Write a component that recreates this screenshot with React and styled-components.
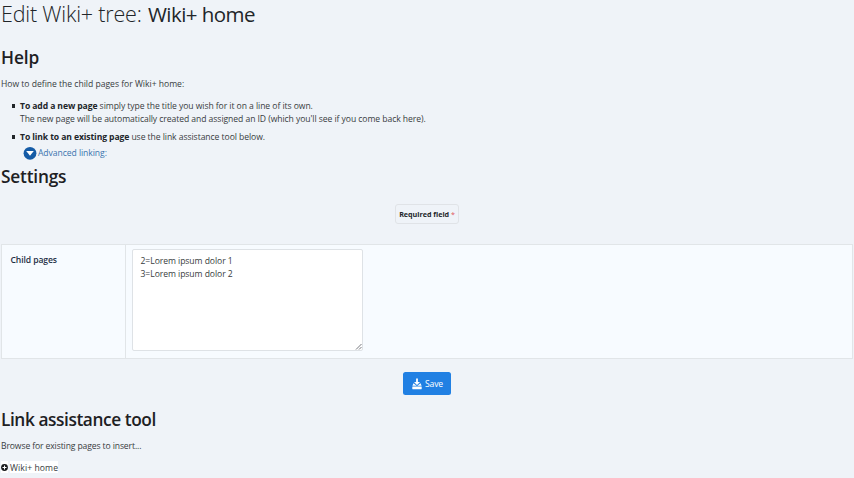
import React from "react";
import styled, { createGlobalStyle } from "styled-components";

const GlobalStyle = createGlobalStyle`
  * { box-sizing: border-box; }
  body {
    margin: 0;
    background: #eff3f8;
    color: #383c40;
    font: 400 8.6px/13.5px "Open Sans", "Noto Sans", sans-serif;
    letter-spacing: -0.065px;
    overflow: hidden;
  }
`;

const Page = styled.main`
  display: flex;
  flex-direction: column;
  width: 854px;
  height: 478px;
  padding: 0 1px;
`;

const Title = styled.h1`
  margin: 0;
  height: 28px;
  font-size: 21.5px;
  line-height: 27px;
  font-weight: 300;
  letter-spacing: -0.2px;
  color: #212529;
  white-space: nowrap;
`;

const TitleName = styled.span`
  margin-left: 1px;
  font-size: 20.5px;
  font-weight: 400;
  letter-spacing: -0.55px;
`;

const Heading = styled.h2`
  margin: ${(p) => p.$top}px 0 0;
  height: 20px;
  font-size: 17.3px;
  line-height: 20px;
  font-weight: 600;
  letter-spacing: ${(p) => p.$tracking || 0}px;
  color: #1d2023;
`;

const Paragraph = styled.p`
  margin: ${(p) => p.$top}px 0 0;
  height: 14px;
  line-height: 14px;
  letter-spacing: ${(p) => p.$tracking || 0}px;
`;

const HelpList = styled.ul`
  list-style: none;
  margin: 8.5px 0 0;
  padding: 0 0 0 19px;
`;

const HelpItem = styled.li`
  position: relative;
  margin-bottom: 4px;
  &::before {
    content: "";
    position: absolute;
    left: -8.5px;
    top: 4.5px;
    width: 3.5px;
    height: 4px;
    background: #212529;
  }
`;

const Strong = styled.strong`
  font-weight: 700;
  letter-spacing: -0.1px;
  color: #212529;
`;

const Toggle = styled.a`
  display: flex;
  align-items: center;
  height: 14px;
  margin: -2.5px 0 0 22px;
  gap: 1px;
  line-height: 14px;
  color: #3a73ae;
  svg { flex: none; }
`;

const RequiredNote = styled.div`
  align-self: center;
  width: 64px;
  height: 20px;
  margin: 17px 0 0 0;
  border: 1px solid #e0e3e7;
  border-radius: 3px;
  text-align: center;
  font-size: 7.2px;
  line-height: 19px;
  font-weight: 700;
  letter-spacing: -0.03px;
  color: #212529;
`;

const Asterisk = styled.span`
  font-weight: 400;
  color: #e0575b;
`;

const FormTable = styled.section`
  display: grid;
  grid-template-columns: 124px 1fr;
  height: 115px;
  margin-top: 20px;
  border: 1px solid #e1e5e8;
  background: #f7fbff;
`;

const LabelCell = styled.div`
  padding: 9px 8.5px;
  border-right: 1px solid #e1e5e8;
  font-weight: 600;
  letter-spacing: -0.1px;
  color: #1e2f45;
`;

const FieldCell = styled.div`
  padding: 4px 6px;
`;

const PagesArea = styled.textarea`
  display: block;
  width: 231px;
  height: 102px;
  padding: 5px 7.5px;
  border: 1px solid #dee2e6;
  border-radius: 2px;
  outline: 0;
  resize: none;
  background: #fff;
  color: #383c40;
  font: inherit;
  letter-spacing: -0.06px;
`;

const FieldFrame = styled.div`
  position: relative;
  width: 231px;
  svg {
    position: absolute;
    right: 1px;
    bottom: 1px;
  }
`;

const SaveButton = styled.button`
  display: flex;
  align-items: center;
  align-self: center;
  width: 48px;
  height: 23px;
  margin-top: 13px;
  padding: 1px 0 0 9px;
  gap: 3px;
  border: 0;
  border-radius: 2.5px;
  background: #2180e3;
  color: #fff;
  font: inherit;
  line-height: 14px;
  letter-spacing: -0.15px;
`;

const SaveLabel = styled.span`
  padding-top: 1px;
`;

const TreeRow = styled.div`
  display: flex;
  align-items: center;
  margin-top: 8px;
  height: 12px;
  gap: 2px;
`;

const TreeIcon = styled.span`
  display: flex;
  align-items: center;
  width: 7px;
  height: 12px;
  background: #fff;
`;

const TreeLabel = styled.span`
  height: 12px;
  line-height: 14px;
  letter-spacing: 0.09px;
  background: #fff;
`;

const ChevronCircle = () => (
  <svg width="14" height="14" viewBox="0 0 14 14">
    <circle cx="7" cy="7.3" r="6.4" fill="#155ba6" />
    <path d="M3.2 5H10.8L7 9.8Z" fill="#fff" />
  </svg>
);

const SaveIcon = () => (
  <svg width="10" height="12" viewBox="0 0 10 12">
    <path d="M4.1 .5H5.9V4H8L5 7L2 4H4.1Z" fill="#fff" />
    <path d="M1.5 5.3L5 8.1L8.5 5.3L9.6 7.8H.4Z" fill="#fff" />
    <rect x=".3" y="8.4" width="9.4" height="2.8" rx=".4" fill="#fff" />
  </svg>
);

const PlusCircle = () => (
  <svg width="7" height="8" viewBox="0 0 7 8">
    <circle cx="3.5" cy="4.5" r="3.4" fill="#17191b" />
    <path d="M3.5 2.5V6.5M1.5 4.5H5.5" stroke="#fff" strokeWidth="1.1" />
  </svg>
);

const ResizeGrip = () => (
  <svg width="7" height="7" viewBox="0 0 7 7">
    <path d="M1 6.5L6.5 1M4 6.5L6.5 4" fill="none" stroke="#666a6f" strokeWidth=".9" />
  </svg>
);

export default function App() {
  return (
    <>
      <GlobalStyle />
      <Page>
        <Title>
          Edit Wiki+ tree: <TitleName>Wiki+ home</TitleName>
        </Title>
        <Heading $top={20} $tracking={-0.1}>Help</Heading>
        <Paragraph $top={9} $tracking={-0.02}>
          How to define the child pages for Wiki+ home:
        </Paragraph>
        <HelpList>
          <HelpItem>
            <Strong>To add a new page</Strong> simply type the title you wish for it on a line of its own.
            <br />
            The new page will be automatically created and assigned an ID (which you'll see if you come back here).
          </HelpItem>
          <HelpItem>
            <Strong>To link to an existing page</Strong> use the link assistance tool below.
          </HelpItem>
        </HelpList>
        <Toggle>
          <ChevronCircle />
          Advanced linking:
        </Toggle>
        <Heading $top={7} $tracking={-0.2}>Settings</Heading>
        <RequiredNote>
          Required field <Asterisk>*</Asterisk>
        </RequiredNote>
        <FormTable>
          <LabelCell>Child pages</LabelCell>
          <FieldCell>
            <FieldFrame>
              <PagesArea spellCheck={false} defaultValue={"2=Lorem ipsum dolor 1\n3=Lorem ipsum dolor 2"} />
              <ResizeGrip />
            </FieldFrame>
          </FieldCell>
        </FormTable>
        <SaveButton>
          <SaveIcon />
          <SaveLabel>Save</SaveLabel>
        </SaveButton>
        <Heading $top={15} $tracking={-0.42}>Link assistance tool</Heading>
        <Paragraph $top={9} $tracking={-0.12}>Browse for existing pages to insert...</Paragraph>
        <TreeRow>
          <TreeIcon>
            <PlusCircle />
          </TreeIcon>
          <TreeLabel>Wiki+ home</TreeLabel>
        </TreeRow>
      </Page>
    </>
  );
}
